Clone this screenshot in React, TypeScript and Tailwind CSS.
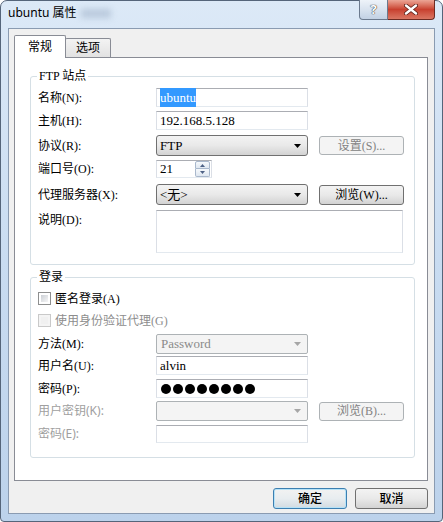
import React from "react";

const serif = "font-['Liberation_Serif','Noto_Sans_CJK_SC',serif]";
const ui = "font-['Noto_Sans','Noto_Sans_CJK_SC',sans-serif]";

const Arrow = ({ disabled }: { disabled?: boolean }) => (
  <svg width="7" height="4" viewBox="0 0 7 4">
    <path d="M0 0H7L3.5 4Z" fill={disabled ? "#a6a6a6" : "#000"} />
  </svg>
);

const TextBox = ({
  children,
  w = "w-[152px]",
  h = "h-[19px]",
}: {
  children?: React.ReactNode;
  w?: string;
  h?: string;
}) => (
  <div
    className={`${w} ${h} border border-t-[#abadb3] border-x-[#dbdfe6] border-b-[#e3e9ef] bg-white flex items-center pl-[3px] text-[13px] text-black ${serif}`}
  >
    {children}
  </div>
);

const Combo = ({ value, disabled }: { value?: string; disabled?: boolean }) =>
  disabled ? (
    <div
      className={`w-[152px] h-[20px] rounded-[2px] border border-[#adb2b5] bg-[#f4f4f4] flex items-center justify-between pl-[4px] pr-[6px] text-[13px] text-[#8a8a8a] ${serif}`}
    >
      <span>{value}</span>
      <Arrow disabled />
    </div>
  ) : (
    <div
      className={`w-[152px] h-[21px] rounded-[3px] border border-[#707070] bg-linear-to-b from-[#f3f3f3] via-[#e9e9e9] to-[#d3d3d3] flex items-center justify-between pl-[3px] pr-[6px] text-[13px] text-black ${serif}`}
    >
      <span>{value}</span>
      <Arrow />
    </div>
  );

const Button = ({ label, disabled }: { label: string; disabled?: boolean }) =>
  disabled ? (
    <div
      className={`ml-[11px] w-[85px] h-[19px] rounded-[3px] border border-[#adb2b5] bg-[#f4f4f4] flex items-center justify-center text-[12px] text-[#838383] ${serif}`}
    >
      {label}
    </div>
  ) : (
    <div
      className={`ml-[11px] w-[85px] h-[20px] rounded-[3px] border border-[#707070] bg-linear-to-b from-[#f3f3f3] via-[#e9e9e9] to-[#d3d3d3] flex items-center justify-center text-[12px] text-black ${serif}`}
    >
      {label}
    </div>
  );

const Row = ({
  label,
  className,
  children,
  dim,
  labelClass = "",
}: {
  label: string;
  className: string;
  children?: React.ReactNode;
  dim?: boolean;
  labelClass?: string;
}) => (
  <div className={`flex ${className}`}>
    <span
      className={`w-[118px] text-[12px] leading-[14px] ${labelClass} ${
        dim ? `text-[#a0a0a0] ${ui}` : `text-black ${serif}`
      }`}
    >
      {label}
    </span>
    {children}
  </div>
);

const Check = ({ label, disabled }: { label: string; disabled?: boolean }) => (
  <div className="flex items-center h-[13px]">
    <div
      className={`w-[13px] h-[13px] border p-[2px] ${
        disabled ? "border-[#c9c9c9] bg-[#f4f4f4]" : "border-[#8e8f8f] bg-white"
      }`}
    >
      <div
        className={`w-full h-full ${
          disabled
            ? "bg-[#f0f0f0]"
            : "bg-linear-to-br from-[#cbcfd5] to-[#f6f6f6]"
        }`}
      />
    </div>
    <span
      className={`ml-[4px] text-[12px] leading-[14px] ${serif} ${
        disabled ? "text-[#8d8d8d]" : "text-black"
      }`}
    >
      {label}
    </span>
  </div>
);

const Group = ({
  title,
  className,
  children,
}: {
  title: string;
  className: string;
  children: React.ReactNode;
}) => (
  <div
    className={`relative w-[385px] border border-[#d5dfe5] rounded-[3px] ${className}`}
  >
    <span
      className={`absolute left-[6px] -top-[8px] bg-white px-[2px] text-[12px] leading-[14px] text-black ${serif}`}
    >
      {title}
    </span>
    <div className="flex flex-col pl-[7px]">{children}</div>
  </div>
);

const SpinArrow = ({ up }: { up?: boolean }) => (
  <svg width="5" height="3" viewBox="0 0 5 3">
    <path d={up ? "M0 3H5L2.5 0Z" : "M0 0H5L2.5 3Z"} fill="#4d6185" />
  </svg>
);

export default function App() {
  return (
    <div className="w-[443px] h-[522px] bg-white">
      <div className="w-[443px] h-[522px] flex flex-col rounded-t-[7px] rounded-b-[4px] border border-[#55657a] bg-linear-to-b from-[#dce9f7] via-[#c9dcf1] to-[#bcd2eb] px-[7px] pb-[7px]">
        {/* title bar */}
        <div className="h-[27px] flex items-start justify-between">
          <div className={`pt-[5px] flex items-center text-[12px] leading-[14px] text-black ${ui}`}>
            <span>ubuntu 属性</span>
            <span className="ml-[4px] w-[30px] h-[9px] bg-[#b9c9dc] blur-[3px]" />
          </div>
          <div className="-mt-px flex h-[20px]">
            <div className="w-[29px] h-full rounded-bl-[4px] border border-t-0 border-[#6b7a8e] bg-linear-to-b from-[#eef3f9] via-[#d9e3ef] to-[#c2d1e4] flex items-center justify-center">
              <span className={`text-[13px] font-bold leading-none text-white [text-shadow:0_0_1px_#222,0_0_1px_#222] ${ui}`}>
                ?
              </span>
            </div>
            <div className="w-[47px] h-full rounded-br-[4px] border border-t-0 border-l-0 border-[#6e2b22] bg-linear-to-b from-[#eba596] via-[#c8402f] to-[#da7663] flex items-center justify-center">
              <svg width="14" height="11" viewBox="0 0 14 11">
                <path d="M2 1.5L12 9.5M12 1.5L2 9.5" stroke="#5a1e16" strokeWidth="4" strokeLinecap="round" />
                <path d="M2 1.5L12 9.5M12 1.5L2 9.5" stroke="#fff" strokeWidth="2.4" strokeLinecap="round" />
              </svg>
            </div>
          </div>
        </div>

        {/* client area */}
        <div className="flex-1 border border-[#8a9bb1] bg-[#f0f0f0] flex flex-col pl-[5px] pr-[6px] pt-[6px]">
          <div className="flex items-end h-[22px] relative z-10">
            <div className={`w-[52px] h-[23px] -mb-px border border-b-0 border-[#898c95] bg-white rounded-t-[2px] flex justify-center pt-[4px] text-[12px] leading-[14px] text-black ${serif}`}>
              常规
            </div>
            <div className={`-ml-px w-[46px] h-[19px] border border-b-0 border-[#898c95] bg-linear-to-b from-[#f3f3f3] to-[#e2e2e2] rounded-t-[2px] flex justify-center pt-[2px] text-[12px] leading-[14px] text-black ${serif}`}>
              选项
            </div>
          </div>

          <div className="h-[424px] border border-[#898c95] bg-white pl-[15px] pt-[18px] flex flex-col">
            <Group title="FTP 站点" className="h-[189px]">
              <Row label="名称(N):" className="mt-[11px] items-center">
                <TextBox>
                  <span className="bg-[#3399ff] text-white">ubuntu</span>
                </TextBox>
              </Row>
              <Row label="主机(H):" className="mt-[4px] items-center">
                <TextBox>192.168.5.128</TextBox>
              </Row>
              <Row label="协议(R):" className="mt-[5px] items-center">
                <Combo value="FTP" />
                <Button label="设置(S)..." disabled />
              </Row>
              <Row label="端口号(O):" className="mt-[4px] items-center">
                <div className="w-[56px] h-[18px] border border-t-[#abadb3] border-x-[#dbdfe6] border-b-[#e3e9ef] bg-white flex items-center justify-between pl-[3px] pr-[1px]">
                  <span className={`text-[13px] text-black ${serif}`}>21</span>
                  <div className="flex flex-col w-[15px]">
                    <div className="h-[8px] border border-[#a9b8cc] rounded-t-[2px] bg-linear-to-b from-[#f6f9fc] to-[#dfe7f0] flex items-center justify-center">
                      <SpinArrow up />
                    </div>
                    <div className="h-[8px] border border-t-0 border-[#a9b8cc] rounded-b-[2px] bg-linear-to-b from-[#f6f9fc] to-[#dfe7f0] flex items-center justify-center">
                      <SpinArrow />
                    </div>
                  </div>
                </div>
              </Row>
              <Row label="代理服务器(X):" className="mt-[6px] items-center">
                <Combo value="<无>" />
                <Button label="浏览(W)..." />
              </Row>
              <Row label="说明(D):" className="mt-[5px] items-start" labelClass="mt-[3px]">
                <div className="w-[247px] h-[43px] border border-t-[#abadb3] border-x-[#dbdfe6] border-b-[#e3e9ef] bg-white" />
              </Row>
            </Group>

            <Group title="登录" className="mt-[12px] h-[181px]">
              <div className="mt-[14px]">
                <Check label="匿名登录(A)" />
              </div>
              <div className="mt-[9px]">
                <Check label="使用身份验证代理(G)" disabled />
              </div>
              <Row label="方法(M):" className="mt-[7px] items-center">
                <Combo value="Password" disabled />
              </Row>
              <Row label="用户名(U):" className="mt-[2px] items-center">
                <TextBox>alvin</TextBox>
              </Row>
              <Row label="密码(P):" className="mt-[4px] items-center">
                <TextBox>
                  <div className="flex gap-[2px] pl-[1px]">
                    {Array.from({ length: 8 }).map((_, i) => (
                      <span key={i} className="w-[10px] h-[10px] rounded-full bg-black" />
                    ))}
                  </div>
                </TextBox>
              </Row>
              <Row label="用户密钥(K):" className="mt-[3px] items-center" dim>
                <Combo disabled />
                <Button label="浏览(B)..." disabled />
              </Row>
              <Row label="密码(E):" className="mt-[4px] items-center" dim>
                <TextBox h="h-[18px]" />
              </Row>
            </Group>
          </div>

          <div className="flex justify-end gap-[8px] mt-[7px]">
            <div className={`w-[74px] h-[21px] rounded-[3px] border border-[#3c7fb1] shadow-[inset_0_0_0_1px_#b6e2f7] bg-linear-to-b from-[#f2f2f2] via-[#e8edf0] to-[#d2dbe1] flex items-center justify-center text-[12px] font-medium text-black ${ui}`}>
              确定
            </div>
            <div className={`w-[73px] h-[21px] rounded-[3px] border border-[#707070] bg-linear-to-b from-[#f3f3f3] via-[#e9e9e9] to-[#d3d3d3] flex items-center justify-center text-[12px] font-medium text-black ${ui}`}>
              取消
            </div>
          </div>
        </div>
      </div>
    </div>
  );
}
